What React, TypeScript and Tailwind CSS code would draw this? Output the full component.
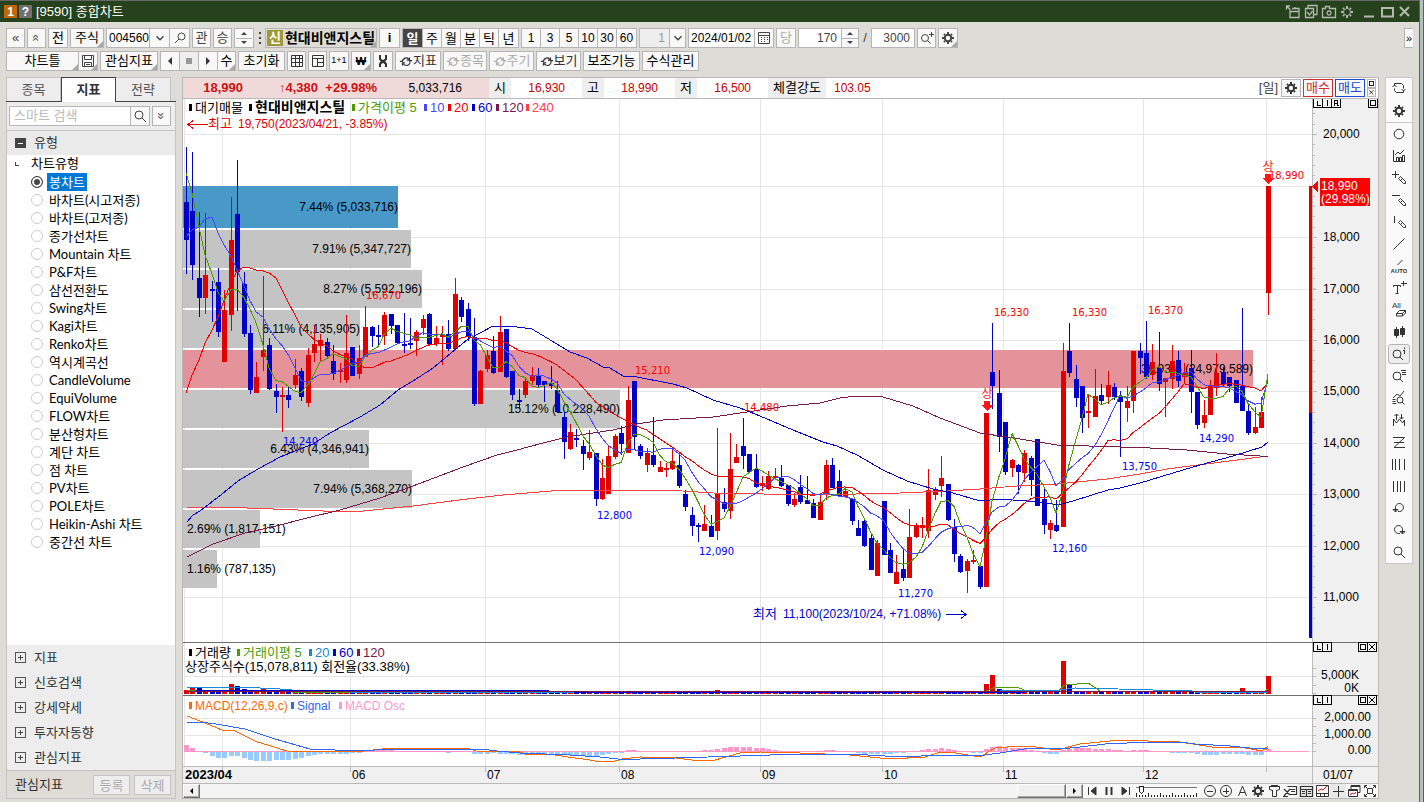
import { useState } from "react";
import type { ReactNode } from "react";

// [up, high, top, bottom, low] in chart units, one entry per day
const candles: number[][] = [
  [0, 147, 202, 240, 274], [0, 152, 211, 265, 280], [0, 212, 278, 298, 317], [1, 213, 275, 298, 314],
  [0, 281, 289, 291, 322], [0, 268, 282, 332, 337], [1, 290, 310, 362, 362], [1, 197, 240, 315, 331],
  [0, 160, 214, 272, 311], [0, 272, 284, 334, 337], [0, 325, 333, 390, 394], [1, 362, 377, 393, 393],
  [1, 276, 350, 357, 371], [0, 338, 345, 389, 390], [0, 384, 391, 397, 413], [1, 387, 395, 397, 432],
  [0, 387, 395, 400, 408], [1, 359, 375, 385, 389], [0, 368, 371, 397, 401], [1, 348, 355, 403, 407],
  [1, 325, 344, 353, 362], [1, 334, 340, 346, 362], [0, 338, 342, 356, 358], [0, 345, 361, 374, 380],
  [1, 363, 370, 372, 383], [1, 315, 353, 380, 383], [0, 347, 347, 376, 376], [1, 345, 358, 374, 379],
  [1, 306, 327, 357, 357], [0, 326, 327, 336, 347], [0, 325, 335, 337, 345], [1, 312, 315, 336, 345],
  [0, 314, 314, 326, 334], [0, 325, 325, 343, 344], [0, 313, 344, 346, 353], [0, 318, 343, 345, 349],
  [1, 330, 332, 341, 356], [1, 315, 319, 328, 335], [0, 313, 314, 344, 346], [1, 326, 338, 344, 346],
  [1, 326, 335, 337, 365], [0, 320, 334, 349, 351], [1, 278, 294, 349, 349], [0, 297, 300, 317, 322],
  [0, 303, 309, 337, 341], [0, 318, 337, 404, 406], [1, 370, 371, 404, 404], [1, 350, 355, 369, 372],
  [0, 336, 351, 373, 374], [1, 316, 332, 372, 372], [0, 329, 329, 377, 378], [0, 371, 371, 395, 400],
  [0, 389, 400, 402, 409], [1, 379, 381, 395, 398], [1, 367, 375, 381, 385], [0, 368, 376, 385, 387],
  [0, 381, 381, 385, 402], [0, 366, 383, 386, 389], [0, 381, 390, 412, 412], [0, 412, 417, 442, 459],
  [1, 424, 432, 449, 450], [0, 429, 438, 440, 447], [0, 440, 446, 454, 470], [1, 430, 452, 458, 460],
  [0, 453, 453, 499, 506], [1, 459, 478, 499, 500], [1, 446, 456, 494, 494], [1, 434, 436, 457, 459],
  [0, 426, 433, 444, 455], [1, 386, 400, 453, 453], [0, 381, 381, 437, 450], [0, 444, 446, 456, 459],
  [1, 448, 453, 465, 472], [0, 417, 455, 465, 467], [1, 461, 467, 472, 472], [1, 463, 468, 470, 477],
  [1, 449, 461, 469, 470], [0, 452, 465, 486, 488], [0, 490, 494, 507, 511], [0, 507, 515, 526, 536],
  [0, 523, 525, 527, 542], [1, 505, 524, 531, 531], [0, 515, 526, 537, 537], [1, 428, 494, 531, 540],
  [0, 488, 502, 509, 512], [1, 433, 469, 511, 519], [1, 444, 457, 463, 463], [0, 418, 446, 456, 469],
  [0, 454, 454, 472, 472], [0, 454, 469, 487, 488], [1, 476, 483, 486, 491], [1, 471, 476, 489, 490],
  [1, 468, 476, 478, 480], [0, 465, 478, 486, 487], [0, 485, 485, 504, 506], [1, 493, 499, 505, 507],
  [0, 475, 487, 502, 504], [0, 476, 500, 504, 504], [0, 499, 503, 518, 518], [1, 495, 502, 520, 520],
  [1, 460, 465, 494, 500], [0, 458, 465, 488, 488], [0, 470, 481, 496, 496], [1, 487, 491, 497, 498],
  [0, 499, 499, 521, 525], [0, 520, 528, 536, 536], [0, 520, 521, 546, 547], [0, 535, 538, 570, 570],
  [1, 540, 543, 576, 576], [0, 501, 501, 555, 555], [0, 543, 550, 573, 573], [1, 555, 572, 584, 584],
  [0, 549, 569, 578, 581], [1, 509, 537, 578, 578], [1, 523, 525, 537, 538], [1, 517, 525, 527, 538],
  [1, 469, 490, 531, 538], [1, 487, 490, 495, 500], [1, 456, 478, 486, 497], [0, 484, 484, 520, 521],
  [0, 519, 527, 554, 562], [0, 554, 556, 572, 573], [1, 559, 561, 571, 593], [1, 550, 560, 562, 564],
  [0, 563, 566, 587, 589], [1, 413, 413, 587, 587], [0, 323, 372, 386, 409], [0, 370, 393, 437, 452],
  [0, 422, 422, 472, 475], [1, 459, 460, 468, 477], [0, 464, 465, 472, 494], [1, 450, 453, 473, 482],
  [0, 456, 458, 480, 496], [0, 439, 439, 506, 506], [0, 489, 499, 525, 534], [1, 520, 523, 530, 539],
  [0, 500, 525, 531, 532], [1, 343, 371, 527, 527], [0, 323, 351, 373, 377], [0, 365, 379, 398, 407],
  [0, 386, 386, 418, 433], [1, 395, 411, 413, 428], [1, 369, 396, 417, 417], [0, 384, 395, 401, 404],
  [1, 371, 385, 397, 404], [0, 383, 387, 397, 400], [0, 391, 396, 402, 457], [1, 386, 401, 408, 422],
  [1, 351, 351, 401, 413], [0, 343, 351, 358, 374], [0, 321, 353, 377, 379], [1, 344, 362, 375, 380],
  [0, 332, 368, 384, 391], [1, 378, 378, 382, 417], [1, 345, 361, 379, 389], [0, 351, 360, 381, 387],
  [1, 363, 373, 377, 383], [0, 350, 368, 392, 413], [0, 392, 392, 425, 429], [1, 400, 415, 423, 428],
  [1, 380, 386, 415, 415], [1, 353, 373, 388, 396], [0, 367, 372, 384, 387], [0, 377, 377, 386, 392],
  [0, 380, 380, 403, 403], [0, 308, 386, 411, 411], [0, 405, 411, 433, 435], [1, 407, 427, 433, 434],
  [1, 397, 412, 428, 428], [1, 186, 186, 293, 315],
];

const xAt = (i: number) => Math.floor(186.5 + 6.4 * i);

// moving average; lead holds the points that need older data
function average(days: number, lead: number[]) {
  const closes = candles.map((c) => (c[0] ? c[2] : c[3]));
  return closes
    .map((_, i) => {
      if (i < lead.length) return `${xAt(i)},${lead[i]}`;
      const part = closes.slice(i - days + 1, i + 1);
      return `${xAt(i)},${part.reduce((a, b) => a + b, 0) / days}`;
    })
    .join(" ");
}

const ma5 = average(5, [173, 193, 227, 255]);
const ma10 = average(10, [237, 230, 227, 219, 217, 233, 245, 256, 270]);
const ma20 = average(20, [393, 375, 360, 343, 330, 317, 300, 283, 271, 267, 268, 270, 271, 273, 278, 290, 302, 315, 327]);
const ma60 =
  "187,522 193,515 200,511 222,494 238,481 258,469 280,457 313,444 330,433 360,417 380,405 398,390 413,381 433,368 451,353 468,339 480,333 493,326 510,326 532,329 552,341 570,352 587,358 603,367 610,368 623,376 637,377 673,384 687,388 713,400 740,408 760,416 793,430 823,442 837,446 857,455 883,470 907,481 933,489 953,493 980,501 1000,499 1040,502 1058,505 1073,501 1108,490 1120,488 1140,483 1183,470 1200,465 1233,456 1262,447 1268,442";
const ma120 =
  "187,557 213,544 245,533 263,529 280,525 303,519 340,510 380,498 413,486 463,467 497,455 517,450 543,443 567,437 593,433 613,430 637,424 663,420 713,417 747,412 787,406 820,403 840,398 857,396 883,397 913,406 940,418 980,433 1007,437 1057,445 1120,447 1150,448 1187,450 1227,454 1260,456 1268,456";
const ma240 =
  "187,508 210,507 247,508 273,509 323,511 363,511 413,506 467,499 503,495 563,490 667,490 713,493 763,494 813,495 900,493 947,491 980,489 1017,486 1057,484 1107,479 1140,474 1167,469 1268,456";

const profile = [
  { y: 186, h: 42, end: 398, label: "7.44% (5,033,716)", fill: "#4898c8" },
  { y: 230, h: 38, end: 411, label: "7.91% (5,347,727)", fill: "#c4c4c4" },
  { y: 270, h: 38, end: 422, label: "8.27% (5,592,196)", fill: "#c4c4c4" },
  { y: 310, h: 38, end: 360, label: "6.11% (4,135,905)", fill: "#c4c4c4" },
  { y: 350, h: 38, end: 1253, label: "36.93% (24,979,589)", fill: "#e5939a" },
  { y: 390, h: 38, end: 620, label: "15.12% (10,228,490)", fill: "#c4c4c4" },
  { y: 430, h: 38, end: 369, label: "6.43% (4,346,941)", fill: "#c4c4c4" },
  { y: 470, h: 38, end: 412, label: "7.94% (5,368,270)", fill: "#c4c4c4" },
  { y: 510, h: 38, end: 260, label: "2.69% (1,817,151)", fill: "#c4c4c4" },
  { y: 550, h: 38, end: 217, label: "1.16% (787,135)", fill: "#c4c4c4" },
];

const peaks: [string, number, number][] = [
  ["16,670", 366, 299], ["15,210", 635, 374], ["14,480", 744, 411], ["16,330", 994, 316],
  ["16,330", 1072, 316], ["16,370", 1148, 314], ["18,990", 1269, 179],
];
const troughs: [string, number, number][] = [
  ["14,240", 283, 445], ["12,800", 597, 519], ["12,090", 699, 555], ["11,270", 898, 597],
  ["12,160", 1052, 552], ["13,750", 1122, 470], ["14,290", 1199, 442],
];

const months: [string, number][] = [
  ["", 222], ["06", 350], ["07", 485], ["08", 619], ["09", 760], ["10", 882], ["11", 1003], ["12", 1143], ["", 1266],
];
const prices: [string, number][] = [
  ["20,000", 134], ["", 186], ["18,000", 237], ["17,000", 289], ["16,000", 340],
  ["15,000", 391], ["14,000", 443], ["13,000", 494], ["12,000", 546], ["11,000", 597],
];

const volumes: Record<number, number> = {
  0: 4, 1: 6, 2: 6, 3: 3, 4: 3, 5: 3, 6: 3, 7: 10, 8: 8, 9: 5, 10: 3, 11: 4, 12: 6, 13: 3, 14: 3,
  83: 4, 125: 10, 126: 19, 127: 5, 134: 3, 136: 3, 137: 33, 138: 10, 139: 3, 140: 3, 165: 6, 169: 18,
};
// days whose volume bar is red though the candle is blue
const redVolume = [0, 1, 126, 165];

const oscillator = [
  6, 3, 0, -2, -5, -7, -7, -5, -5, -7, -9, -10, -10, -10, -9, -9, -9, -8, -7, -5, -4, -3, -3, -3, -3, -3, -2, -2,
  0, 0, 1, 2, 1, 0, 0, 0, 0, 0, 0, 0, -1, -2, 0, 0, 0, -3, -3, -3, -2, -3, -3, -3, -4, -4, -4, -4, -4, -4, -4, -4,
  -4, -4, -5, -5, -5, -4, -3, -2, -2, 1, 1, 0, 0, 0, 0, 0, 0, -1, -1, -1, -1, 1, 1, 2, 3, 4, 4, 4, 4, 3, 3, 2, 1,
  0, 0, -1, -1, -1, -1, -1, 1, 1, 0, -1, -1, -2, -3, -3, -3, -3, -3, -2, -2, -1, 0, 1, 2, 2, 3, 2, 1, 0, -1, -2, -2, 2,
  4, 5, 4, 3, 3, 3, 1, 0, -2, -3, -3, 1, 2, 3, 3, 3, 2, 2, 2, 1, 1, 0, 1, 1, 1, 0, 0, -1, -2, -2, -2, -2, -3, -4, -4,
  -4, -3, -3, -3, -3, -4, -4, -4, 2,
];

type Legend = [string, number, string];
const priceLegend: Legend[] = [
  ["가격이평 5", 358, "#4b9a00"], ["10", 430, "#4848ff"], ["20", 454, "#f00000"],
  ["60", 478, "#0000c8"], ["120", 502, "#7a1848"], ["240", 532, "#ff4040"],
];
const volumeLegend: Legend[] = [
  ["거래량", 195, "#000000"], ["거래이평 5", 243, "#4b9a00"], ["20", 315, "#1888d8"], ["60", 339, "#0000c8"], ["120", 363, "#7a1848"],
];
const macdLegend: Legend[] = [
  ["MACD(12,26,9,c)", 195, "#ff6800"], ["Signal", 297, "#3068f0"], ["MACD Osc", 345, "#ff98c8"],
];

function LegendRow({ items, y, className }: { items: Legend[]; y: number; className: string }) {
  return (
    <>
      {items.map(([text, x, color]) => (
        <g key={text} fill={color} className={className}>
          <rect x={x - 6} y={y - 8} width={3} height={7} />
          <text x={x} y={y}>{text}</text>
        </g>
      ))}
    </>
  );
}

function Corner({ x, y, kind }: { x: number; y: number; kind: string }) {
  return (
    <g fill="none" stroke="#000">
      <rect x={x + 0.5} y={y + 0.5} width={9} height={9} fill="#f4f4f4" />
      {kind === "L" && <path d="M4.5 2.5v5h3" transform={`translate(${x} ${y})`} />}
      {kind === "I" && <path d="M5.5 2v6" transform={`translate(${x} ${y})`} />}
      {kind === "R" && <path d="M3.5 8V2.5h3v3h-3M5.5 5.5l2 2.500" transform={`translate(${x} ${y})`} />}
      {kind === "box" && <rect x={x + 2.5} y={y + 2.5} width={5} height={5} />}
      {kind === "x" && <path d="M2 2l6 6M8 2l-6 6" transform={`translate(${x} ${y})`} shapeRendering="auto" />}
    </g>
  );
}

function LimitMark({ x, y }: { x: number; y: number }) {
  return (
    <g fill="#ff1818">
      <text x={x} y={y} textAnchor="middle">상</text>
      <path d={`M${x - 3} ${y + 3}h6v4h3l-6 6l-6 -6h3z`} />
    </g>
  );
}

function Chart() {
  return (
    <svg viewBox="183 99 1195 684" className="block w-full text-[12px]" shapeRendering="crispEdges" role="img" aria-label="차트">
      <rect x={183} y={99} width={1129} height={668} fill="#fff" />
      <g fill="#e6e6e6">
        <rect x={184} y={99} width={1} height={667} />
        {months.map(([, x]) => <rect key={x} x={x} y={99} width={1} height={667} />)}
        {prices.map(([, y]) => <rect key={y} x={184} y={y} width={1128} height={1} />)}
        {[676, 718, 735].map((y) => <rect key={y} x={184} y={y} width={1128} height={1} />)}
      </g>

      {/* volume by price */}
      {profile.map((p) => (
        <g key={p.y}>
          <rect x={183} y={p.y} width={p.end - 183} height={p.h} fill={p.fill} />
          {p.end > 300 ? (
            <text x={p.end} y={p.y + p.h / 2 + 4} textAnchor="end">{p.label}</text>
          ) : (
            <text x={187} y={p.y + p.h / 2 + 4}>{p.label}</text>
          )}
        </g>
      ))}

      {/* candles */}
      {candles.map(([up, high, top, bottom, low], i) => (
        <g key={i} fill={up ? "#e00000" : "#0000c8"}>
          <rect x={xAt(i)} y={high} width={1} height={low - high} />
          <rect x={xAt(i) - 2} y={top} width={5} height={bottom - top} />
        </g>
      ))}
      <g fill="none">
        <polyline points={ma240} stroke="#ff4040" />
        <polyline points={ma120} stroke="#7a1848" />
        <polyline points={ma60} stroke="#0000c8" />
        <polyline points={ma20} stroke="#f00000" />
        <polyline points={ma10} stroke="#4848ff" />
        <polyline points={ma5} stroke="#4b9a00" />
      </g>
      <g className="font-['DejaVu_Sans',sans-serif] text-[10px]">
        {peaks.map(([t, x, y]) => <text key={x} x={x} y={y} fill="#ff0000">{t}</text>)}
        {troughs.map(([t, x, y]) => <text key={x} x={x} y={y} fill="#0000ff">{t}</text>)}
      </g>
      <LimitMark x={987} y={398} />
      <LimitMark x={1268} y={171} />

      <rect x={189} y={104} width={3} height={7} />
      <text x={195} y={112} className="text-[13px]">대기매물</text>
      <rect x={249} y={104} width={3} height={7} />
      <text x={255} y={112} className="text-[14px] font-bold">현대비앤지스틸</text>
      <LegendRow items={priceLegend} y={112} className="text-[13px]" />
      <g fill="#e00000">
        <path d="M208 124.500h-20M193 120.500l-5 4l5 4" fill="none" stroke="#e00000" />
        <text x={208} y={128} className="text-[13px]">최고</text>
        <text x={238} y={128}>19,750(2023/04/21, -3.85%)</text>
      </g>
      <g fill="#0000c8">
        <text x={753} y={618} className="text-[13px]">최저</text>
        <text x={783} y={618}>11,100(2023/10/24, +71.08%)</text>
        <path d="M946 614.500h20M961 610.500l5 4l-5 4" fill="none" stroke="#0000c8" />
      </g>

      {/* volume */}
      {candles.map(([up], i) => {
        const h = volumes[i] ?? 2;
        return <rect key={i} x={xAt(i) - 2} y={694 - h} width={5} height={h} fill={up || redVolume.includes(i) ? "#e00000" : "#0000c8"} />;
      })}
      <g fill="none">
        <path d="M187 690h14l50 0l41 2h71" stroke="#4b9a00" />
        <polyline points="363,692 984,692 996,687 1016,687 1022,689 1028,692 1058,691 1066,684 1077,684 1088,683 1100,691 1264,692 1268,689" stroke="#4b9a00" />
        <polyline points="187,688 215,687 248,687 260,688 280,689 292,690 363,692.500 587,692.500 985,692 1016,690 1060,690 1075,688 1118,689 1153,690 1188,690 1195,692 1268,692" stroke="#1888d8" />
        <polyline points="196,690.500 536,690.500 587,692.500 990,692.500 1060,691.500 1268,691.500" stroke="#0000c8" />
        <path d="M187 691.500H1268" stroke="#7a1848" />
      </g>
      <LegendRow items={volumeLegend} y={657} className="text-[13px]" />
      <text x={185} y={671} className="text-[13px]">상장주식수(15,078,811) 회전율(33.38%)</text>

      {/* macd */}
      {oscillator.map((v, i) => (
        <rect key={i} x={xAt(i) - 2} y={v > 0 ? 751 - v : 751} width={5} height={Math.abs(v)} fill={v > 0 ? "#ff98c8" : "#98ccff"} />
      ))}
      <rect x={184} y={751} width={1125} height={1} fill="#ff98c8" />
      <g fill="none">
        <polyline
          points="187,716 200,721 222,730 235,731 243,735 257,742 268,745 280,749 287,751 330,752 365,751 390,748 420,749 450,748 470,749 476,751 520,752 525,754 555,755 575,758 590,760 600,762 615,761 622,759 640,757 676,758 700,761 715,760 740,753 760,752 800,753 850,755 880,758 903,759 912,757 925,757 937,753 950,752 962,754 980,757 995,748 1020,746 1036,747 1057,750 1080,744 1110,741 1140,740 1148,741 1180,742 1212,747 1240,747 1262,751 1268,746"
          stroke="#ff6800"
        />
        <polyline
          points="187,722 200,722 216,724 245,729 275,739 310,749 360,751 390,749 480,749 497,751 520,753 570,755 600,757 618,759 640,759 676,758 740,756 800,754 850,754 903,757 940,755 985,755 1000,753 1030,748 1060,749 1080,747 1105,744 1150,742 1180,742 1195,744 1230,746 1250,748 1268,748"
          stroke="#3068f0"
        />
      </g>
      <LegendRow items={macdLegend} y={710} className="text-[12px]" />

      {/* axes */}
      <rect x={1309} y={186} width={3} height={227} fill="#e00000" />
      <rect x={1309} y={413} width={3} height={225} fill="#0000c8" />
      <rect x={1312} y={99} width={66} height={684} fill="#f0f0f0" />
      <rect x={183} y={767} width={1195} height={16} fill="#f0f0f0" />
      <g fill="#bcbcbc">
        <rect x={1312} y={99} width={1} height={684} />
        <rect x={183} y={766} width={1195} height={1} />
        {Array.from({ length: 50 }, (_, i) => (
          <rect key={i} x={1313} y={Math.round(113.400 + i * 10.290)} width={2} height={1} />
        ))}
        {prices.map(([, y]) => <rect key={y} x={1313} y={y} width={4} height={1} />)}
        {[668, 676, 685, 693, 718, 726, 735, 743, 751].map((y) => <rect key={y} x={1313} y={y} width={3} height={1} />)}
        {months.map(([, x]) => <rect key={x} x={x} y={767} width={1} height={5} />)}
      </g>
      <rect x={183} y={642} width={1195} height={1} fill="#707070" />
      <rect x={183} y={695} width={1195} height={1} fill="#707070" />
      {prices.map(([t, y]) => <text key={y} x={1323} y={y + 4}>{t}</text>)}
      <g textAnchor="end">
        <text x={1359} y={679}>5,000K</text>
        <text x={1359} y={692}>0K</text>
        <text x={1371} y={721}>2,000.00</text>
        <text x={1371} y={738}>1,000.00</text>
        <text x={1371} y={754}>0.00</text>
      </g>
      {months.map(([t, x]) => <text key={x} x={x + 2} y={779}>{t}</text>)}
      <text x={185} y={779} className="text-[13px] font-bold">2023/04</text>
      <text x={1323} y={779}>01/07</text>
      <path d="M1312 186.500l6 -6v12z" fill="#ff0000" />
      <rect x={1320} y={178} width={50} height={28} fill="#ff0000" />
      <g fill="#fff">
        <text x={1321} y={190}>18,990</text>
        <text x={1321} y={203}>(29.98%)</text>
      </g>
      <Corner x={1313} y={98} kind="L" />
      <Corner x={1322} y={98} kind="I" />
      <Corner x={1331} y={98} kind="R" />
      <Corner x={1368} y={98} kind="box" />
      {[642, 695].map((y) => (
        <g key={y}>
          <Corner x={1313} y={y} kind="L" />
          <Corner x={1322} y={y} kind="I" />
          <Corner x={1358} y={y} kind="box" />
          <Corner x={1367} y={y} kind="x" />
        </g>
      ))}
    </svg>
  );
}

const icons: Record<string, ReactNode> = {
  refresh: <path d="M3.500 5v-2.500h7l2 2v3M12.500 9.500v2h-7l-2-2v-2M1.500 6l2-2 2 2M10.500 8l2 2 2-2" />,
  gear: (
    <>
      <circle cx="8" cy="8" r="3.200" strokeWidth="2" />
      <path d="M8 2v2M8 12v2M2 8h2M12 8h2M4 4l1 1M11 11l1 1M12 4l-1 1M4 12l1-1" strokeWidth="2" />
    </>
  ),
  sun: (
    <>
      <circle cx="8" cy="8" r="3.500" />
      <path d="M8 2v2M8 12v2M2 8h2M12 8h2M4 4l1 1M11 11l1 1M12 4l-1 1M4 12l1-1" strokeWidth="2" />
    </>
  ),
  circle: <circle cx="8" cy="8" r="4.800" />,
  stats: <path d="M2.500 2v11.500H14M5.500 13V9.500h2V13M8.500 13v-3.500h2V13M11.500 13V7.500h2V13M4 7l3-3 2 2 4-4" />,
  plusPen: <path d="M1 4.500h7M4.500 1v7M7.500 8.500l2-2 5 5v2h-2zM9.500 10.500l2-2" />,
  minusPen: <path d="M1 3.500h8M7.500 8.500l2-2 5 5v2h-2zM9.500 10.500l2-2" />,
  barPen: <path d="M3.500 2v7M7.500 8.500l2-2 5 5v2h-2zM9.500 10.500l2-2" />,
  line: <path d="M2.500 13.500l11-11" />,
  auto: (
    <>
      <path d="M6.500 7l5-5" />
      <text x="8" y="15" textAnchor="middle" fill="currentColor" stroke="none" className="text-[6px] font-bold">AUTO</text>
    </>
  ),
  text: <path d="M2.500 7V5.500h7V7M6.500 5.500v8M4.500 13.500h3M10 3.500h6M12.500 1v5" />,
  all: (
    <>
      <text x="1" y="6" fill="currentColor" stroke="none" className="text-[8px]">All</text>
      <path d="M5.500 11.500l3-3h6v2.500l-3 3h-6zM5.500 11.500h6l3-3M11.500 11.500V14" />
    </>
  ),
  candles: <path d="M5.500 3v11M11.500 2v11M3.500 5.500h4v6h-4zM9.500 4.500h4v6h-4z" fill="currentColor" />,
  searchInfo: <><circle cx="6" cy="8" r="4" /><path d="M9 11l3 3M13.500 4v4M13.500 1.500v1.500M12 4.500h1.500" /></>,
  searchList: <><circle cx="6" cy="8" r="4" /><path d="M9 11l3 3M10 2.500h5M11 4.500h4M11 6.500h4" /></>,
  searchPlus: <><circle cx="6" cy="8" r="3.500" /><path d="M8.500 10.500l3 3M10 4.500h5M12.500 2v5" /></>,
  search: <><circle cx="7" cy="7" r="4" /><path d="M10 10l4 4" /></>,
  searchLeft: <><circle cx="9.500" cy="6.500" r="3.500" /><path d="M7 9l-4 4" /></>,
  chartSearch: <><circle cx="9" cy="10" r="3" /><path d="M11 12l2.500 2.500M2 8l4-4 3 2 4-5M1.500 9.500h3M1.500 11.500h3M1.500 13.500h4" /></>,
  wave: <path d="M2.500 14V7l3 4 3-4 3 4 2-3v6M5.500 8V2M3.500 4l2-2 2 2M10.500 2v5M8.500 5l2 2 2-2" />,
  zig: <path d="M2 3.500h11.500L3 13.500h11M3 8.500h10" />,
  bars5: <path d="M1.500 3v11M4.500 3v11M8.500 3v11M13.500 3v11" />,
  bars4: <path d="M2.500 3v11M6.500 3v11M9.500 3v11M13.500 3v11" />,
  undo: <path d="M4.500 12V8a4 4 0 1 1 4 3.500H7M2 9.500h5L4.500 12z" />,
  redo: <path d="M11.500 12V8a4 4 0 1 0-4 3.500H9M14 9.500H9l2.500 2.500z" />,
  cycle: <path d="M1 8.500h3M4 9a4 4 0 0 1 7-3M12 7a4 4 0 0 1-7 4M12 7.500h3M9 7l3 0 0-3M7 10H4v3" strokeWidth="1.400" />,
  save: <path d="M2.500 2.500h11v11h-11zM4.500 2.500v4h7v-4M4.500 13.500v-4h7v4M6 11.500h4" />,
  grid: <path d="M2.500 2.500h11v11h-11zM2.500 5.500h11M2.500 9.500h11M6.500 2.500v11M10.500 2.500v11" />,
  layout: <path d="M2.500 2.500h11v11h-11zM2.500 5.500h11M7.500 5.500v8M7.500 9.500h6" />,
  cross: <path d="M5 2v4l2 2-2 3v3M11 2v4L9 8l2 3v3M5 6l6 5M11 6l-6 5" strokeWidth="2" />,
  calendar: <path d="M2.500 2.500h11v11h-11zM2.500 5.500h11M5 7.500h1M8 7.500h1M11 7.500h1M5 9.500h1M8 9.500h1M11 9.500h1M5 11.500h1M8 11.500h1" />,
  chevron: <path d="M4 6l4 4 4-4" strokeWidth="1.600" />,
  winOut: <path d="M1 2h4M1.500 1.500v4M1.500 2l4 4M5 6.500v7h9v-9H7M5 7.500h9M10 3v1" strokeWidth="1.300" />,
  winCheck: <path d="M2.500 4.500h8v9h-8zM5 4V1.500h9v9h-3M4 8l2.500 3 3-4" strokeWidth="1.300" />,
  camera: <path d="M1.500 4.500h3v-2h4v2h6v9h-13zM8 7a2 2 0 1 0 .1 0" strokeWidth="1.300" />,
  minimize: <path d="M3 12.500h10" strokeWidth="2" />,
  maximize: <path d="M3 4h11v8.500H3z" strokeWidth="2" />,
  close: <path d="M3 3l9 9M12 3l-9 9" strokeWidth="2" />,
  first: <path d="M3.500 4v8M11 4v8L6 8z" fill="currentColor" />,
  pause: <path d="M5.500 4v8M10.500 4v8" strokeWidth="2" />,
  last: <path d="M12.500 4v8M5 4v8l5-4z" fill="currentColor" />,
  zoomOut: <><circle cx="8" cy="8" r="5.500" /><path d="M5 8.500h6" /></>,
  zoomIn: <><circle cx="8" cy="8" r="5.500" /><path d="M5 8.500h6M8.500 5v6" /></>,
  compass: <path d="M4.500 13l4-10 4 10M6 9.500h5" />,
  tee: <path d="M3 3.500h11M3.500 3v3.500l3 1M13.500 3v3.500l-3 1M6.500 7v6.500h4V7M5 2.500h7" />,
  note: <path d="M5.500 3.500h9v8h-7M7 6.500h6M9 8.500h4M2 6l6 6M8 6l-6 7M1 13.500h5" strokeWidth="1.200" />,
  table: <path d="M2.500 3.500h12v10h-12zM2.500 6.500h12M8.500 6.500v7M4 8.500h3M4 10.500h3M10 8.500h3M10 10.500h3" strokeWidth="1.200" />,
  miniChart: <><path d="M2.500 2.500h12v11h-12zM2.500 10.500h12M6.500 10v3M10.500 10v3" /><path d="M4 8l3-2 2 1 4-4" stroke="#d02020" /></>,
  plus: <path d="M8.500 3v11M3 8.500h11" />,
  windows: <><path d="M2.500 6.500h9v7h-9zM5 6V2.500h9v7h-2M2.500 7.500h9M5 3.500h9" /><path d="M4 12l2-2 2 1 2-2" stroke="#d02020" /></>,
  full: <path d="M2.500 5V2.500H5M11 2.500h2.500V5M13.500 11v2.500H11M5 13.500H2.500V11M5.500 5.500h5v5h-5zM3 3l2 2M13 3l-2 2M3 13l2-2M13 13l-2-2" />,
};

function Icon({ name, className = "size-4" }: { name: string; className?: string }) {
  return (
    <svg viewBox="0 0 16 16" className={`shrink-0 ${className}`} fill="none" stroke="currentColor" aria-hidden="true">
      {icons[name]}
    </svg>
  );
}

const line = "border border-[#b5b5b5] bg-[#f8f8f8]";

function Fold() {
  return <span className="absolute right-0 bottom-0 border-3 border-transparent border-r-[#aaa] border-b-[#aaa]" />;
}

function Btn({ className = "", children, more, label }: { className?: string; children: ReactNode; more?: boolean; label?: string }) {
  return (
    <button aria-label={label} className={`relative flex h-5 shrink-0 items-center justify-center whitespace-nowrap ${line} ${className}`}>
      {children}
      {more && <Fold />}
    </button>
  );
}

function Cell({ className = "", children, label, more }: { className?: string; children: ReactNode; label?: string; more?: boolean }) {
  return (
    <button aria-label={label} className={`relative flex items-center justify-center ${className}`}>
      {children}
      {more && <Fold />}
    </button>
  );
}

const group = `flex h-5 shrink-0 divide-x divide-[#b5b5b5] ${line}`;

function Spinner() {
  return (
    <span className="flex w-4 shrink-0 flex-col divide-y divide-[#b5b5b5]">
      <button aria-label="증가" className="flex flex-1 items-center justify-center">
        <svg viewBox="0 0 6 3" className="h-[3px] w-1.5" aria-hidden="true"><path d="M0 3l3-3 3 3z" fill="#444" /></svg>
      </button>
      <button aria-label="감소" className="flex flex-1 items-center justify-center">
        <svg viewBox="0 0 6 3" className="h-[3px] w-1.5" aria-hidden="true"><path d="M0 0l3 3 3-3z" fill="#444" /></svg>
      </button>
    </span>
  );
}

function Triangle({ left, className = "h-2 w-1" }: { left?: boolean; className?: string }) {
  return (
    <svg viewBox="0 0 4 8" className={className} aria-hidden="true">
      <path d={left ? "M4 0v8L0 4z" : "M0 0v8l4-4z"} fill="currentColor" />
    </svg>
  );
}

function TitleBar() {
  return (
    <header className="flex h-[22px] items-center border-t border-[#666] bg-[#26421c] pr-1.5 pl-1 text-white">
      <span className="flex size-[13px] items-center justify-center bg-[#c06808] text-[12px] font-bold">1</span>
      <span className="ml-0.5 flex size-[13px] items-center justify-center bg-[#707070] text-[12px] font-bold">?</span>
      <h1 className="ml-1 text-[13px]">[9590] 종합차트</h1>
      <div className="ml-auto flex items-center gap-0.5 text-[#b4bab0]">
        {["winOut", "winCheck", "camera", "sun"].map((n) => (
          <button key={n} aria-label={n}><Icon name={n} /></button>
        ))}
        <div className="ml-1 flex gap-0.5">
          {["minimize", "maximize", "close"].map((n) => (
            <button key={n} aria-label={n}><Icon name={n} /></button>
          ))}
        </div>
      </div>
    </header>
  );
}

const periods = ["일", "주", "월", "분", "틱", "년"];
const minutes = ["1", "3", "5", "10", "30", "60"];

function Toolbar() {
  const [period, setPeriod] = useState("일");
  return (
    <div className="flex flex-col gap-[3px] pt-1.5 pl-1.5 text-[13px] text-black">
      <div className="flex gap-0.5">
        <Btn className="w-[19px] text-[#444]">«</Btn>
        <Btn className="w-[19px] text-[#444]" label="위로"><span className="rotate-90">«</span></Btn>
        <Btn className="w-5">전</Btn>
        <Btn className="w-[34px]" more>주식</Btn>
        <div className={group}>
          <input aria-label="종목코드" defaultValue="004560" className="w-[43px] bg-white pl-0.5 text-[12px] outline-none" />
          <Cell className="w-5 text-[#444]" label="목록"><Icon name="chevron" className="size-3.5" /></Cell>
          <Cell className="w-[19px] text-[#444]" label="찾기"><Icon name="searchLeft" /></Cell>
        </div>
        <Btn className="w-[19px] text-[#444]">관</Btn>
        <Btn className="w-[19px] text-[#444]">승</Btn>
        <div className={`flex h-5 w-5 justify-center ${line}`}><Spinner /></div>
        <span className="flex w-[7px] flex-col items-center justify-center gap-[3px]">
          <i className="size-0.5 bg-[#444]" /><i className="size-0.5 bg-[#444]" /><i className="size-0.5 bg-[#444]" />
        </span>
        <button className="relative flex h-5 w-28 shrink-0 items-center justify-center gap-0.5 border border-[#b5b5b5] bg-[#dddcd6] text-[14px] font-bold whitespace-nowrap">
          <span className="flex size-4 items-center justify-center bg-[#a09838] text-[13px] text-white">신</span>
          현대비앤지스틸
          <Fold />
        </button>
        <Btn className="w-[21px] font-bold">i</Btn>
        <div className={group}>
          {periods.map((p) => (
            <button
              key={p}
              onClick={() => setPeriod(p)}
              className={p === period ? "w-5 bg-[#444] font-bold text-white" : "w-[19px]"}
            >
              {p}
            </button>
          ))}
        </div>
        <div className={`${group} text-[12px]`}>
          {minutes.map((m) => <button key={m} className="w-[19px]">{m}</button>)}
        </div>
        <div className={`${group} w-[47px] text-[12px]`}>
          <input aria-label="주기" defaultValue="1" className="w-[30px] bg-[#eee] pr-1 text-right text-[#999] outline-none" />
          <Cell className="flex-1 text-[#444]" label="주기 목록"><Icon name="chevron" className="size-3.5" /></Cell>
        </div>
        <div className={`${group} w-[86px] text-[12px]`}>
          <input aria-label="날짜" defaultValue="2024/01/02" className="w-[66px] bg-white pl-0.5 outline-none" />
          <Cell className="flex-1 text-[#444]" label="달력"><Icon name="calendar" /></Cell>
        </div>
        <Btn className="w-5 text-[#b0aca0]">당</Btn>
        <div className={`${group} text-[12px]`}>
          <input aria-label="조회 개수" defaultValue="170" className="w-[43px] bg-white pr-1 text-right text-[#444] outline-none" />
          <Spinner />
        </div>
        <span className="flex w-2 items-center justify-center text-[#444]">/</span>
        <input aria-label="전체 개수" defaultValue="3000" className="h-5 w-11 border border-[#b5b5b5] bg-white pr-1 text-right text-[12px] text-[#444] outline-none" />
        <Btn className="w-[19px] text-[#444]" label="확대"><Icon name="searchPlus" /></Btn>
        <Btn className="w-5 text-[#444]" label="설정" more><Icon name="gear" /></Btn>
        <button className="mr-1.5 ml-auto flex h-5 w-[9px] items-center justify-center border border-r-0 border-[#b5b5b5] bg-[#f8f8f8] text-[11px]">»</button>
      </div>
      <div className="flex gap-0.5">
        <div className={group}>
          <Cell className="w-[72px]" more>차트틀</Cell>
          <Cell className="w-[18px] text-[#444]" label="저장" more><Icon name="save" /></Cell>
        </div>
        <Btn className="w-[58px]" more>관심지표</Btn>
        <div className={group}>
          <Cell className="w-[19px] text-[#333]" label="이전"><Triangle left /></Cell>
          <Cell className="w-[19px] bg-[#eee]" label="정지"><span className="size-1.5 bg-[#999]" /></Cell>
          <Cell className="w-[19px] text-[#333]" label="다음"><Triangle /></Cell>
          <Cell className="w-[17px]" more>수</Cell>
        </div>
        <Btn className="w-[47px]">초기화</Btn>
        <Btn className="w-[19px] text-[#333]" label="격자"><Icon name="grid" /></Btn>
        <Btn className="w-[19px] text-[#333]" label="화면 분할"><Icon name="layout" /></Btn>
        <Btn className="w-5 text-[9px]">1+1</Btn>
        <Btn className="w-5 text-[11px] font-bold" more>₩</Btn>
        <Btn className="w-5 text-[#333]" label="도구"><Icon name="cross" /></Btn>
        <Btn className="w-[46px] text-[#333]"><Icon name="cycle" className="size-3.5" />지표</Btn>
        <Btn className="w-11 text-[#aaa]"><Icon name="cycle" className="size-3.5" />종목</Btn>
        <Btn className="w-[45px] text-[#aaa]"><Icon name="cycle" className="size-3.5" />주기</Btn>
        <Btn className="w-[45px] text-[#333]"><Icon name="cycle" className="size-3.5" />보기</Btn>
        <Btn className="w-[57px]">보조기능</Btn>
        <Btn className="w-[57px]">수식관리</Btn>
      </div>
    </div>
  );
}

const chartTypes = [
  "봉차트", "바차트(시고저종)", "바차트(고저종)", "종가선차트", "Mountain 차트", "P&F차트", "삼선전환도",
  "Swing차트", "Kagi차트", "Renko차트", "역시계곡선", "CandleVolume", "EquiVolume", "FLOW차트", "분산형차트",
  "계단 차트", "점 차트", "PV차트", "POLE차트", "Heikin-Ashi 차트", "중간선 차트",
];
const categories = ["지표", "신호검색", "강세약세", "투자자동향", "관심지표"];

function Sidebar() {
  const [type, setType] = useState("봉차트");
  return (
    <aside className="flex w-[170px] shrink-0 flex-col text-[13px] text-[#333]">
      <div className="flex h-[25px] border-b border-[#444]">
        <button className="w-[55px] border border-b-0 border-[#c4c4c4] bg-[#ededed] text-[#555]">종목</button>
        <button className="-mb-px w-[55px] border border-b-0 border-[#444] bg-white font-bold">지표</button>
        <button className="w-[55px] border border-b-0 border-l-0 border-[#c4c4c4] bg-[#ededed] text-[#555]">전략</button>
      </div>
      <div className="flex flex-1 flex-col border-x border-b border-[#c4c4c4] bg-[#ededed]">
        <div className="flex h-7 items-center gap-0.5 px-0.5">
          <div className={`${group} w-[141px]`}>
            <input aria-label="지표 검색" placeholder="스마트 검색" className="w-[121px] bg-white pl-1 outline-none placeholder:text-[#bbb]" />
            <Cell className="flex-1 text-[#444]" label="검색"><Icon name="search" /></Cell>
          </div>
          <Btn className="w-[19px] text-[#444]" label="펼치기"><span className="rotate-90">»</span></Btn>
        </div>
        <button className="flex h-[25px] items-center gap-2 border-t border-[#c4c4c4] bg-[#eaeaea] pl-2 text-left">
          <span className="flex h-2.5 w-[11px] items-center justify-center bg-[#444]"><i className="h-px w-[5px] bg-white" /></span>
          유형
        </button>
        <div
          role="radiogroup"
          aria-labelledby="chart-types"
          className="flex-1 bg-white font-['Lato','Noto_Sans_CJK_KR',sans-serif] text-black"
        >
          <div id="chart-types" className="flex h-[18px] items-center gap-3 pl-2">
            <span className="size-1 border-b border-l border-[#444]" />
            차트유형
          </div>
          {chartTypes.map((t) => (
            <label key={t} className="flex h-[18px] items-center gap-1 pl-6">
              <input
                type="radio"
                name="type"
                checked={t === type}
                onChange={() => setType(t)}
                className="size-3 shrink-0 appearance-none rounded-full border border-[#ccc] bg-white checked:border-[#444] checked:bg-[#444] checked:shadow-[inset_0_0_0_2px_#fff]"
              />
              <span className={t === type ? "bg-[#0078d7] px-0.5 leading-[18px] text-white" : "px-0.5 leading-[18px]"}>{t}</span>
            </label>
          ))}
        </div>
        {categories.map((c) => (
          <button key={c} className="flex h-[25px] items-center gap-2 pl-2 text-left">
            <span className="relative flex size-[11px] items-center justify-center border border-[#555]">
              <i className="h-px w-[5px] bg-[#444]" />
              <i className="absolute h-[5px] w-px bg-[#444]" />
            </span>
            {c}
          </button>
        ))}
        <div className="flex h-7 items-center gap-1 border-t border-[#c4c4c4] bg-[#dddcd6] pr-1 pl-2">
          <span className="mr-auto">관심지표</span>
          <button disabled className="h-5 w-[37px] border border-[#c4c4c4] bg-[#eee] text-[#aaa]">등록</button>
          <button disabled className="h-5 w-[37px] border border-[#c4c4c4] bg-[#eee] text-[#aaa]">삭제</button>
        </div>
      </div>
    </aside>
  );
}

const quotes = [
  { label: "시", value: "16,930" },
  { label: "고", value: "18,990" },
  { label: "저", value: "16,500" },
];

function QuoteBar() {
  return (
    <div className="flex h-[21px] items-stretch border-b border-[#b8b8b8] bg-white text-[12px] leading-5">
      <div className="flex w-[306px] shrink-0 bg-[#f0d9d9] text-[13px] font-bold text-[#d01010]">
        <span className="w-[60px] text-right">18,990</span>
        <span className="w-[75px] text-right">↑4,380</span>
        <span className="w-[59px] text-right">+29.98%</span>
        <span className="w-[85px] text-right text-[12px] font-normal text-black">5,033,716</span>
      </div>
      {quotes.map((q) => (
        <div key={q.label} className="flex w-[93px] shrink-0">
          <span className="w-[22px] bg-[#eee] text-center text-[13px]">{q.label}</span>
          <span className="flex-1 pr-[17px] text-right text-[#c80000]">{q.value}</span>
        </div>
      ))}
      <span className="w-[58px] shrink-0 bg-[#eee] text-center text-[13px]">체결강도</span>
      <span className="pl-2 text-[#c80000]">103.05</span>
      <div className="ml-auto flex items-center gap-0.5 pr-0.5 text-[13px]">
        <span className="text-[#444]">[일]</span>
        <button aria-label="설정" className={`ml-px flex h-[18px] w-5 items-center justify-center text-[#333] ${line}`}><Icon name="gear" /></button>
        <button className="h-[18px] w-[30px] border border-[#d03030] bg-[#f8f8f8] leading-4 text-[#d03030]">매수</button>
        <button className="h-[18px] w-[30px] border border-[#2048d0] bg-[#f8f8f8] leading-4 text-[#2048d0]">매도</button>
        <div className="flex flex-col text-[#222]">
          <button aria-label="최대화" className={`flex size-[9px] items-center justify-center ${line}`}><span className="size-[5px] border border-[#222]" /></button>
          <button aria-label="닫기" className={`flex size-[9px] items-center justify-center ${line}`}><Icon name="close" className="size-[7px]" /></button>
        </div>
      </div>
    </div>
  );
}

const bevel = "border border-t-white border-l-white border-r-[#707070] border-b-[#707070] bg-[#f0f0f0] shadow-[inset_-1px_-1px_0_#aaa]";
const bottomTools = ["zoomOut", "zoomIn", "compass", "gear", "tee", "note", "table", "miniChart", "plus", "windows", "full"];

function ScrollRow() {
  return (
    <div className="flex h-[15px] items-center border-t border-[#b8b8b8] bg-[#f8f8f8] text-[#333]">
      <button aria-label="왼쪽으로" className={`flex h-3.5 w-[17px] shrink-0 items-center justify-center text-black ${bevel}`}><Triangle left className="h-1.5 w-[3px]" /></button>
      <div className="flex h-3.5 flex-1 justify-end bg-[#f4f4f4]">
        <span className={`w-[49px] ${bevel}`} />
      </div>
      <button aria-label="오른쪽으로" className={`mr-0.5 flex h-3.5 w-[17px] shrink-0 items-center justify-center text-black ${bevel}`}><Triangle className="h-1.5 w-[3px]" /></button>
      {["first", "pause", "last"].map((n) => (
        <button key={n} aria-label={n}><Icon name={n} /></button>
      ))}
      <svg viewBox="0 0 62 14" className="mr-1 ml-[3px] h-3.5 w-[62px] shrink-0" stroke="#222" fill="none" shapeRendering="crispEdges" aria-hidden="true">
        <path d="M0 3.500h61" stroke="#777" />
        {Array.from({ length: 21 }, (_, i) => <path key={i} d={`M${i * 3 + 0.5} 13v${i % 4 ? -2 : -4}`} />)}
        <path d="M3.500 2.500h4v5l-2 2l-2 -2z" fill="#fff" />
      </svg>
      {bottomTools.map((n) => (
        <button
          key={n}
          aria-label={n}
          className={n === "table" || n === "plus" ? "h-3.5 w-4 bg-[#e8e8e8]" : "h-3.5 w-4"}
        >
          <Icon name={n} className="-my-px size-4" />
        </button>
      ))}
    </div>
  );
}

const tools = [
  "circle", "stats", "plusPen", "minusPen", "barPen", "line", "auto", "text", "all", "candles", "searchInfo",
  "searchList", "chartSearch", "wave", "zig", "bars5", "bars4", "undo", "redo", "search",
];

function ToolBox() {
  return (
    <nav className="flex w-7 shrink-0 flex-col items-center self-start border border-[#c8c8c8] bg-[#fafafa] text-[#333]">
      <div className="flex w-full flex-col items-center border-b border-[#c8c8c8]">
        {["refresh", "gear"].map((n) => (
          <button key={n} aria-label={n} className="flex h-[22px] items-center"><Icon name={n} /></button>
        ))}
      </div>
      {tools.map((n) => (
        <button
          key={n}
          aria-label={n}
          className={
            n === "searchInfo"
              ? "my-px flex h-5 w-[22px] items-center justify-center rounded-[3px] border border-[#b5b5b5] bg-[#eee]"
              : "flex h-[22px] items-center"
          }
        >
          <Icon name={n} />
        </button>
      ))}
    </nav>
  );
}

export default function App() {
  return (
    <div className="flex min-h-screen bg-[#dddcd6] font-['Liberation_Sans','Noto_Sans_CJK_KR',sans-serif]">
      <div className="flex min-w-0 flex-1 flex-col">
        <TitleBar />
        <Toolbar />
        <main className="flex flex-1 gap-1.5 px-1.5 pt-1.5 pb-1">
          <Sidebar />
          <section className="min-w-0 flex-1 self-start border border-[#b8b8b8]">
            <QuoteBar />
            <Chart />
            <ScrollRow />
          </section>
          <ToolBox />
        </main>
      </div>
      <div className="w-[5px] shrink-0 border-x border-[#5a625e] bg-[#b4c0bc]" />
    </div>
  );
}
